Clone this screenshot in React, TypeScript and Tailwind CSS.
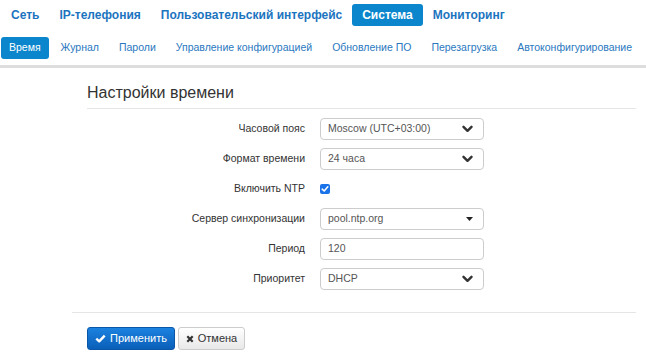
import React from "react";

const Chevron = () => (
  <svg width="11" height="8" viewBox="0 0 11 8" className="shrink-0">
    <path d="M1.5 1.8 L5.5 5.8 L9.5 1.8" fill="none" stroke="#333" strokeWidth="2.4" strokeLinecap="round" strokeLinejoin="round" />
  </svg>
);

const Caret = () => (
  <svg width="7" height="4" viewBox="0 0 7 4" className="shrink-0">
    <path d="M0 0 L7 0 L3.5 4 Z" fill="#222" />
  </svg>
);

function Row({ label, children }: { label: string; children: React.ReactNode }) {
  return (
    <div className="flex items-center h-[22px]">
      <div className="w-[305px] text-right text-[10.5px] text-[#333] whitespace-nowrap">{label}</div>
      <div className="ml-[15px] w-[164px] h-full flex items-center">{children}</div>
    </div>
  );
}

function Select({ value, kind = "chevron" }: { value: string; kind?: "chevron" | "caret" | "none" }) {
  return (
    <div className="w-full h-full border border-[#ccc] rounded-[4px] flex items-center justify-between pl-[7px] pr-[10px] bg-white">
      <span className="text-[10.5px] text-[#555] whitespace-nowrap">{value}</span>
      {kind === "chevron" && <Chevron />}
      {kind === "caret" && <Caret />}
    </div>
  );
}

export default function App() {
  const top = ["Сеть", "IP-телефония", "Пользовательский интерфейс", "Система", "Мониторинг"];
  const sub = ["Время", "Журнал", "Пароли", "Управление конфигурацией", "Обновление ПО", "Перезагрузка", "Автоконфигурирование"];
  return (
    <div className="w-[646px] h-[356px] bg-white overflow-hidden" style={{ fontFamily: '"Liberation Sans", Arial, sans-serif' }}>
      <div className="flex items-center pt-[4px] pl-[1px]">
        {top.map((t) => (
          <div
            key={t}
            className={
              "h-[22px] px-[10px] flex items-center rounded-[3px] text-[12px] font-bold whitespace-nowrap " +
              (t === "Система" ? "bg-[#0b86cc] text-white" : "text-[#1c74bf]")
            }
          >
            {t}
          </div>
        ))}
      </div>
      <div className="flex items-center mt-[11px] pl-[1px] gap-[4px]">
        {sub.map((t) => (
          <div
            key={t}
            className={
              "h-[22px] px-[8px] flex items-center rounded-[3px] text-[10.5px] whitespace-nowrap " +
              (t === "Время" ? "bg-[#0b86cc] text-white" : "text-[#2a78c0]")
            }
          >
            {t}
          </div>
        ))}
      </div>
      <div className="mt-[6px] h-[3px] bg-[#dddddd]" />
      <div className="mt-[15px] ml-[87px] mr-[10px] pb-[5px] border-b border-[#e5e5e5] text-[16px] leading-[20px] text-[#333]">
        Настройки времени
      </div>
      <div className="mt-[9px] flex flex-col gap-[8px]">
        <Row label="Часовой пояс">
          <Select value="Moscow (UTC+03:00)" />
        </Row>
        <Row label="Формат времени">
          <Select value="24 часа" />
        </Row>
        <Row label="Включить NTP">
          <span className="w-[10px] h-[10px] rounded-[2px] bg-[#1a73e8] flex items-center justify-center">
            <svg width="8" height="8" viewBox="0 0 8 8">
              <path d="M1.2 4.2 L3.2 6 L6.8 1.8" fill="none" stroke="white" strokeWidth="1.6" strokeLinecap="round" strokeLinejoin="round" />
            </svg>
          </span>
        </Row>
        <Row label="Сервер синхронизации">
          <Select value="pool.ntp.org" kind="caret" />
        </Row>
        <Row label="Период">
          <Select value="120" kind="none" />
        </Row>
        <Row label="Приоритет">
          <Select value="DHCP" />
        </Row>
      </div>
      <div className="mt-[22px] ml-[72px] mr-[10px] border-t border-[#e5e5e5]" />
      <div className="mt-[14px] ml-[87px] flex gap-[3px]">
        <button className="h-[23px] w-[88px] rounded-[3px] border border-[#0a56a8] bg-gradient-to-b from-[#1c82e0] to-[#0a5fb8] text-white text-[11px] flex items-center justify-center gap-[4px]">
          <svg width="11" height="9" viewBox="0 0 11 9">
            <path d="M1.3 4.6 L4.2 7.3 L9.7 1.6" fill="none" stroke="white" strokeWidth="2.4" strokeLinejoin="round" />
          </svg>
          Применить
        </button>
        <button className="h-[23px] w-[67px] rounded-[3px] border border-[#ccc] bg-gradient-to-b from-white to-[#e8e8e8] text-[#333] text-[11px] flex items-center justify-center gap-[4px]">
          <svg width="8" height="8" viewBox="0 0 8 8">
            <path d="M1.3 1.3 L6.7 6.7 M6.7 1.3 L1.3 6.7" fill="none" stroke="#333" strokeWidth="2.2" />
          </svg>
          Отмена
        </button>
      </div>
    </div>
  );
}
